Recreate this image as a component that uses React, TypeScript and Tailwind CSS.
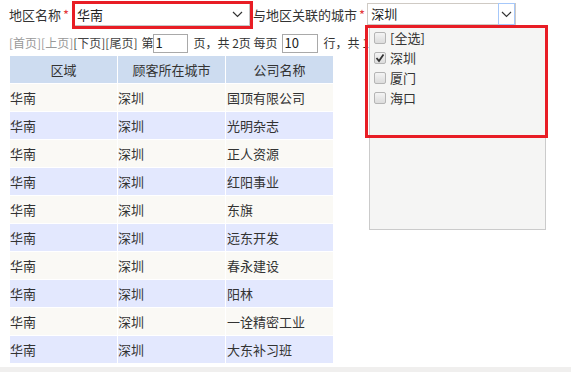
import React from 'react';

const rows = [
  '国顶有限公司',
  '光明杂志',
  '正人资源',
  '红阳事业',
  '东旗',
  '远东开发',
  '春永建设',
  '阳林',
  '一诠精密工业',
  '大东补习班',
];

const cities = [
  { label: '[全选]', checked: false },
  { label: '深圳', checked: true },
  { label: '厦门', checked: false },
  { label: '海口', checked: false },
];

const Chevron: React.FC<{ className?: string }> = ({ className }) => (
  <svg width="11" height="7" viewBox="0 0 11 7" className={className}>
    <polyline points="1,1 5.5,5.5 10,1" fill="none" stroke="#333" strokeWidth="1.2" />
  </svg>
);

const CheckBox: React.FC<{ checked: boolean }> = ({ checked }) => (
  <div className="w-[12px] h-[12px] rounded-[2px] border border-[#b5b5b5] bg-gradient-to-b from-[#f4f4f4] to-[#dcdcdc] flex items-center justify-center">
    {checked && (
      <svg width="10" height="10" viewBox="0 0 10 10">
        <polyline points="1.5,5 4,8 8.5,1.5" fill="none" stroke="#333" strokeWidth="1.8" />
      </svg>
    )}
  </div>
);

const App: React.FC = () => {
  return (
    <div className="relative w-[571px] h-[372px] bg-white flex flex-col text-[13px] text-[#333] font-['Noto_Sans_CJK_SC','Microsoft_YaHei',sans-serif] overflow-hidden">
      {/* filter row */}
      <div className="h-[30px] flex items-center pl-[9px]">
        <span>地区名称</span>
        <span className="text-[#e4393c] ml-[2px]">*</span>
        <div className="ml-[3px] w-[181px] h-[28px] border-[3px] border-[#e81d25] flex items-center">
          <div className="w-[175px] h-[22px] border-r border-b border-[#c8c8c8] bg-white flex items-center pl-[2px] pr-[6px]">
            <span className="flex-1 text-[#222]">华南</span>
            <Chevron />
          </div>
        </div>
        <span>与地区关联的城市</span>
        <span className="text-[#e4393c] ml-[2px]">*</span>
        <div className="ml-[2px] w-[149px] h-[22px] border border-[#cfcac4] bg-white flex items-center self-start mt-[3px]">
          <span className="flex-1 pl-[3px] text-[#222]">深圳</span>
          <div className="w-[17px] h-[22px] border border-[#a6c8fa] flex items-center justify-center">
            <Chevron />
          </div>
        </div>
      </div>

      {/* pagination row */}
      <div className="h-[26px] flex items-center pl-[9px] whitespace-nowrap text-[12px]">
        <span className="text-[#999]">[首页][上页]</span>
        <span className="text-[#444]">[下页][尾页]</span>
        <span className="ml-[4px]">第</span>
        <div className="w-[35px] h-[19px] border border-[#a9a9a9] flex items-center pl-[1px] text-[13px] text-[#222]">1</div>
        <span className="ml-[5px]">页，共 2页 每页</span>
        <div className="ml-[4px] w-[36px] h-[19px] border border-[#a9a9a9] flex items-center pl-[2px] text-[13px] text-[#222]">10</div>
        <span className="ml-[6px]">行，共 1</span>
      </div>

      {/* table */}
      <div className="ml-[10px] grid grid-cols-[107px_107px_107px] gap-px w-[323px]">
        {['区域', '顾客所在城市', '公司名称'].map((h) => (
          <div key={h} className="h-[27px] bg-[#cddcf0] flex items-center justify-center">
            {h}
          </div>
        ))}
        {rows.map((name, i) => {
          const bg = i % 2 === 0 ? 'bg-[#faf9f5]' : 'bg-[#e3e8fe]';
          return (
            <React.Fragment key={name}>
              <div className={`h-[27px] ${bg} flex items-center`}>华南</div>
              <div className={`h-[27px] ${bg} flex items-center`}>深圳</div>
              <div className={`h-[27px] ${bg} flex items-center pl-[1px]`}>{name}</div>
            </React.Fragment>
          );
        })}
      </div>

      <div className="flex-1" />
      <div className="h-[5px] bg-[#f0efee]" />

      {/* city dropdown */}
      <div className="absolute left-[369px] top-[27px] w-[177px] h-[203px] bg-[#f5f5f4] border border-[#cbcbcb] pl-[4px]">
        {cities.map((c) => (
          <div key={c.label} className="h-[20px] flex items-center gap-[4px]">
            <CheckBox checked={c.checked} />
            <span className="text-[#333]">{c.label}</span>
          </div>
        ))}
      </div>
      <div className="absolute left-[365px] top-[25px] w-[183px] h-[113px] border-[3px] border-[#e81d25] pointer-events-none" />
    </div>
  );
};

export default App;
